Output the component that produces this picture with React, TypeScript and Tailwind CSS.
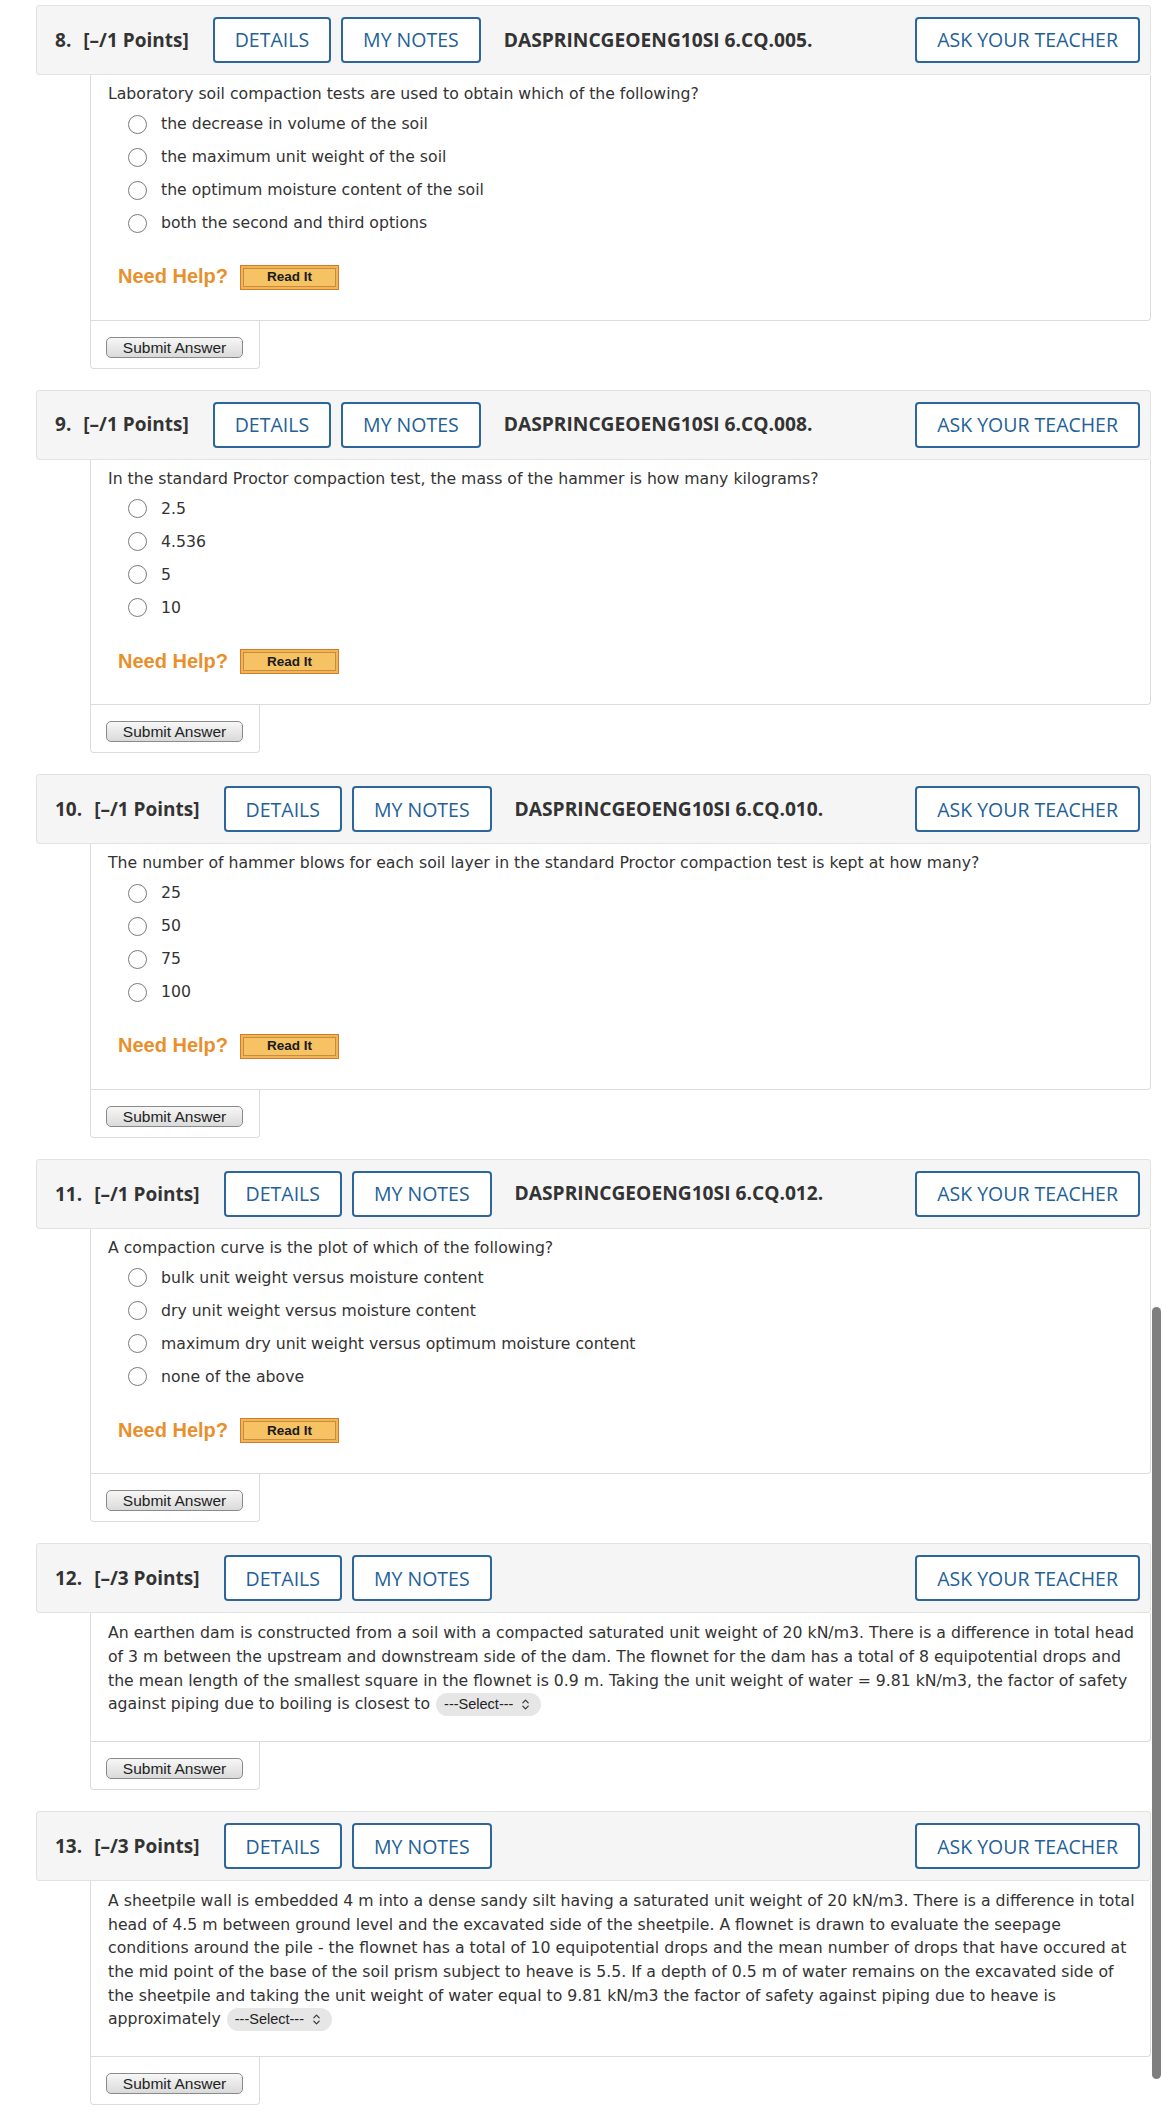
import { ChevronsUpDown } from "lucide-react";

/* One question block: either a multiple choice list or a paragraph with an inline select */
type Question = {
  num: number;
  points: number;
  code?: string;
  text: string;
  options?: string[];
  selectAfter?: boolean;
};

const questions: Question[] = [
  {
    num: 8,
    points: 1,
    code: "DASPRINCGEOENG10SI 6.CQ.005.",
    text: "Laboratory soil compaction tests are used to obtain which of the following?",
    options: [
      "the decrease in volume of the soil",
      "the maximum unit weight of the soil",
      "the optimum moisture content of the soil",
      "both the second and third options",
    ],
  },
  {
    num: 9,
    points: 1,
    code: "DASPRINCGEOENG10SI 6.CQ.008.",
    text: "In the standard Proctor compaction test, the mass of the hammer is how many kilograms?",
    options: ["2.5", "4.536", "5", "10"],
  },
  {
    num: 10,
    points: 1,
    code: "DASPRINCGEOENG10SI 6.CQ.010.",
    text: "The number of hammer blows for each soil layer in the standard Proctor compaction test is kept at how many?",
    options: ["25", "50", "75", "100"],
  },
  {
    num: 11,
    points: 1,
    code: "DASPRINCGEOENG10SI 6.CQ.012.",
    text: "A compaction curve is the plot of which of the following?",
    options: [
      "bulk unit weight versus moisture content",
      "dry unit weight versus moisture content",
      "maximum dry unit weight versus optimum moisture content",
      "none of the above",
    ],
  },
  {
    num: 12,
    points: 3,
    text: "An earthen dam is constructed from a soil with a compacted saturated unit weight of 20 kN/m3. There is a difference in total head of 3 m between the upstream and downstream side of the dam. The flownet for the dam has a total of 8 equipotential drops and the mean length of the smallest square in the flownet is 0.9 m. Taking the unit weight of water = 9.81 kN/m3, the factor of safety against piping due to boiling is closest to",
    selectAfter: true,
  },
  {
    num: 13,
    points: 3,
    text: "A sheetpile wall is embedded 4 m into a dense sandy silt having a saturated unit weight of 20 kN/m3. There is a difference in total head of 4.5 m between ground level and the excavated side of the sheetpile. A flownet is drawn to evaluate the seepage conditions around the pile - the flownet has a total of 10 equipotential drops and the mean number of drops that have occured at the mid point of the base of the soil prism subject to heave is 5.5. If a depth of 0.5 m of water remains on the excavated side of the sheetpile and taking the unit weight of water equal to 9.81 kN/m3 the factor of safety against piping due to heave is approximately",
    selectAfter: true,
  },
];

function OutlineButton({ label }: { label: string }) {
  return (
    <button className="h-[46px] rounded-[4px] border-2 border-[#2c669c] bg-white px-[20px] text-[19.5px] text-[#245f97]">
      {label}
    </button>
  );
}

function FakeSelect() {
  return (
    <span className="ml-[6px] inline-flex h-[23px] items-center gap-[6px] rounded-full bg-[#e6e6e6] pl-[8px] pr-[9px] align-middle font-['Liberation_Sans',Arial,sans-serif] text-[14.5px] leading-[17px] text-[#222]">
      ---Select---
      <ChevronsUpDown size={13} strokeWidth={2.2} className="text-[#333]" />
    </span>
  );
}

function QuestionBlock({ q }: { q: Question }) {
  return (
    <section className="mb-[21px]">
      {/* grey header bar */}
      <header className="flex h-[70px] items-center rounded-[3px] border border-[#e2e2e2] bg-[#f5f5f5] pl-[18px] pr-[10px] font-['Open_Sans',sans-serif] text-[#333]">
        <span className="mr-[12px] text-[19px] font-bold">{q.num}.</span>
        <span className="mr-[24px] text-[19px] font-bold">[–/{q.points} Points]</span>
        <div className="flex gap-[10px]">
          <OutlineButton label="DETAILS" />
          <OutlineButton label="MY NOTES" />
        </div>
        {q.code && <span className="ml-[23px] text-[19.2px] font-bold">{q.code}</span>}
        <div className="ml-auto">
          <OutlineButton label="ASK YOUR TEACHER" />
        </div>
      </header>

      {/* question content */}
      <div
        className={
          "ml-[54px] rounded-br-[4px] border-x border-b border-[#dcdcdc] pl-[17px] pr-[12px] font-['DejaVu_Sans',Verdana,sans-serif] text-[15.7px] leading-[23.6px] text-[#333] " +
          (q.options ? "pt-[7px] pb-[30px]" : "pt-[8px] pb-[25px]")
        }
      >
        <p>
          {q.text}
          {q.selectAfter && <FakeSelect />}
        </p>
        {q.options && (
          <>
            <ul className="mt-[2px] pl-[20px]">
              {q.options.map((opt) => (
                <li key={opt} className="flex h-[33px] items-center gap-[14px]">
                  <span className="h-[19px] w-[19px] shrink-0 rounded-full border-[1.5px] border-[#7b7b7b] bg-white" />
                  <span>{opt}</span>
                </li>
              ))}
            </ul>
            <div className="mt-[25px] flex h-[25px] items-center gap-[12px] pl-[10px] font-['Liberation_Sans',Arial,sans-serif]">
              <span className="text-[20px] font-bold text-[#e8902c]">Need Help?</span>
              <span className="flex h-[25px] w-[99px] items-center justify-center border border-[#d27d26] bg-[#f2b457] p-[2px]">
                <span className="flex h-full w-full items-center justify-center border border-[#c98b3c] bg-[#f5c264] text-[13.5px] font-bold text-[#1a1a1a]">
                  Read It
                </span>
              </span>
            </div>
          </>
        )}
      </div>

      {/* submit tab */}
      <div className="ml-[54px] h-[48px] w-[170px] rounded-b-[4px] border-x border-b border-[#dcdcdc] pl-[15px] pt-[14px]">
        <button className="h-[21px] w-[137px] rounded-[5px] border border-[#8a8a8a] bg-gradient-to-b from-[#f7f7f7] to-[#dadada] font-['Liberation_Sans',Arial,sans-serif] text-[15.5px] leading-[19px] text-[#222]">
          Submit Answer
        </button>
      </div>
    </section>
  );
}

export default function App() {
  return (
    <div className="relative min-h-screen bg-white pl-[36px] pr-[19px] pt-[5px]">
      {questions.map((q) => (
        <QuestionBlock key={q.num} q={q} />
      ))}
      {/* overlay scrollbar thumb */}
      <div className="absolute left-[1152px] top-[1307px] h-[772px] w-[9px] rounded-full bg-[#7f7f7f]" />
    </div>
  );
}
